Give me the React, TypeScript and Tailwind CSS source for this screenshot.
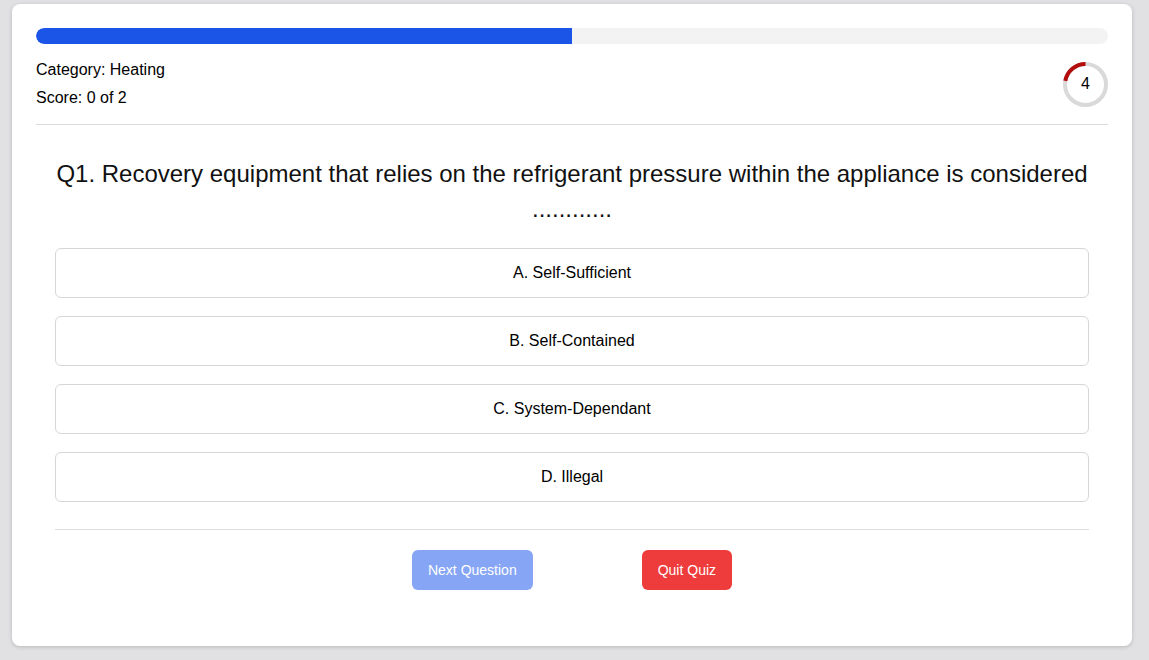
import React from "react";

function Timer() {
  const r = 20.5;
  const c = 2 * Math.PI * r;
  const frac = 0.22;
  return (
    <div className="relative w-[45px] h-[45px]">
      <svg width="45" height="45" viewBox="0 0 45 45" className="absolute inset-0">
        <circle cx="22.5" cy="22.5" r={r} fill="none" stroke="#d9d9d9" strokeWidth="4" />
        <circle
          cx="22.5"
          cy="22.5"
          r={r}
          fill="none"
          stroke="#b30d0d"
          strokeWidth="4"
          strokeDasharray={`${c * frac} ${c}`}
          transform="rotate(-90 22.5 22.5) scale(1 -1) translate(0 -45)"
        />
      </svg>
      <div className="absolute inset-0 flex items-center justify-center text-[16px] text-black">4</div>
    </div>
  );
}

export default function App() {
  const options = ["A. Self-Sufficient", "B. Self-Contained", "C. System-Dependant", "D. Illegal"];
  return (
    <div
      className="w-[1149px] h-[660px] bg-[#e1e1e3] pt-[4px] pl-[12px]"
      style={{ fontFamily: '"Liberation Sans", Arial, sans-serif' }}
    >
      <div className="w-[1120px] bg-white rounded-[8px] h-[642px] shadow-[0_1px_4px_rgba(0,0,0,0.18)] pt-[24px] px-[24px]">
        <div className="h-[16px] rounded-full bg-[#f3f3f3] overflow-hidden">
          <div className="h-full w-1/2 bg-[#1b55e7] rounded-l-full" />
        </div>
        <div className="flex items-center justify-between mt-[14px] pb-[14px] border-b border-[#dcdcdc]">
          <div className="flex flex-col gap-[4px] text-[16px] leading-[24px] text-black">
            <p>Category: Heating</p>
            <p>Score: 0 of 2</p>
          </div>
          <Timer />
        </div>
        <div className="px-[19px]">
          <h2 className="mt-[31px] text-center text-[24px] leading-[35px] text-[#111]">
            Q1. Recovery equipment that relies on the refrigerant pressure within the appliance is considered ............
          </h2>
          <div className="mt-[22px] flex flex-col gap-[18px]">
            {options.map((o) => (
              <div
                key={o}
                className="h-[50px] border border-[#d6d6d6] rounded-[6px] flex items-center justify-center text-[16px] text-black"
              >
                {o}
              </div>
            ))}
          </div>
          <div className="mt-[27px] border-t border-[#dcdcdc]" />
          <div className="mt-[20px] flex justify-center gap-[109px]">
            <button className="h-[40px] px-[16px] rounded-[6px] bg-[#86a5f5] text-white text-[14px]">
              Next Question
            </button>
            <button className="h-[40px] px-[16px] rounded-[6px] bg-[#ee3b3b] text-white text-[14px]">
              Quit Quiz
            </button>
          </div>
        </div>
      </div>
    </div>
  );
}
